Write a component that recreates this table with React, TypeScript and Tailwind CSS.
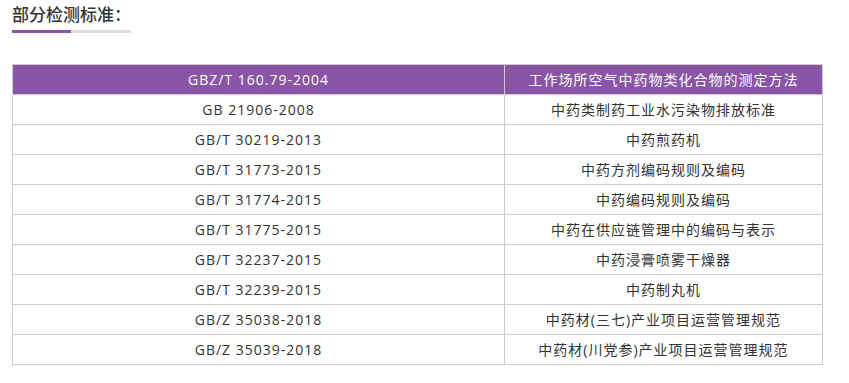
import React from "react";

const rows: [string, string][] = [
  ["GB 21906-2008", "中药类制药工业水污染物排放标准"],
  ["GB/T 30219-2013", "中药煎药机"],
  ["GB/T 31773-2015", "中药方剂编码规则及编码"],
  ["GB/T 31774-2015", "中药编码规则及编码"],
  ["GB/T 31775-2015", "中药在供应链管理中的编码与表示"],
  ["GB/T 32237-2015", "中药浸膏喷雾干燥器"],
  ["GB/T 32239-2015", "中药制丸机"],
  ["GB/Z 35038-2018", "中药材(三七)产业项目运营管理规范"],
  ["GB/Z 35039-2018", "中药材(川党参)产业项目运营管理规范"],
];

export default function App() {
  return (
    <div
      className="w-[849px] h-[383px] bg-white text-[#333] pl-[12px] pt-[3px]"
      style={{ fontFamily: '"Open Sans", "Noto Sans CJK SC", sans-serif' }}
    >
      <div className="text-[17px] leading-[24px] font-medium text-[#333]">部分检测标准：</div>
      <div className="flex mt-[3px] h-[3px] w-[119px]">
        <div className="w-[59px] bg-[#8a55a6]" />
        <div className="flex-1 bg-[#dddddd]" />
      </div>
      <table className="mt-[31px] w-[811px] border-collapse text-[14px] tracking-[1px] table-fixed">
        <colgroup>
          <col className="w-[492px]" />
          <col />
        </colgroup>
        <thead>
          <tr className="h-[30px] bg-[#8a55a6] text-white">
            <th className="font-normal border border-[#cccccc] p-0">GBZ/T 160.79-2004</th>
            <th className="font-normal border border-[#cccccc] border-l-[#8a55a6] p-0">工作场所空气中药物类化合物的测定方法</th>
          </tr>
        </thead>
        <tbody>
          {rows.map(([a, b]) => (
            <tr key={a} className="h-[30px]">
              <td className="border border-[#cccccc] text-center p-0">{a}</td>
              <td className="border border-[#cccccc] text-center p-0">{b}</td>
            </tr>
          ))}
        </tbody>
      </table>
    </div>
  );
}
